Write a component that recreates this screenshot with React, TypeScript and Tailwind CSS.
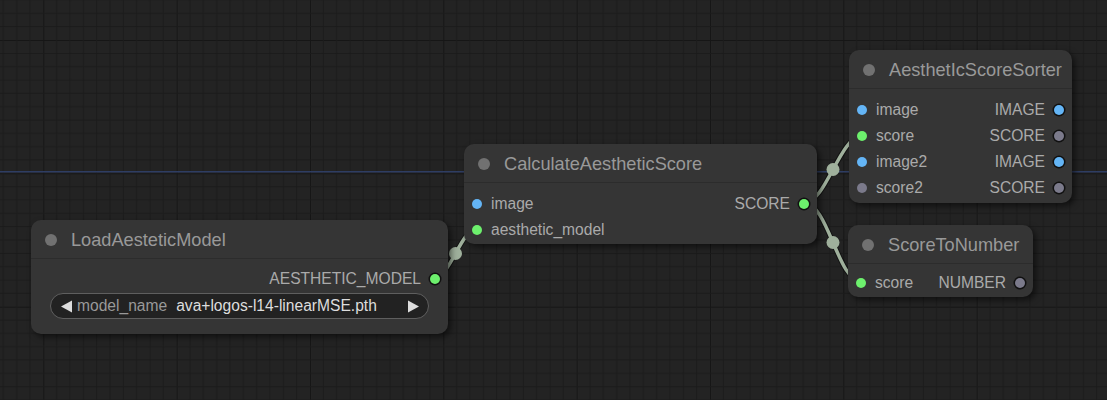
import React from "react";

type Slot = { label: string; dot: string };

type NodeProps = {
  title: string;
  className: string;
  bodyClass?: string;
  inputs?: Slot[];
  outputs?: Slot[];
  children?: React.ReactNode;
};

// slot dot colours
const GREEN = "bg-[#6df06d]";
const BLUE = "bg-[#64b5f6]";
const GREY = "bg-[#7b7a8b]";

const GraphNode = ({ title, className, bodyClass = "pt-[8px]", inputs = [], outputs = [], children }: NodeProps) => {
  const rows = Math.max(inputs.length, outputs.length);
  return (
    <div
      className={
        "absolute flex flex-col rounded-[10px] bg-[#353535] shadow-[3px_3px_6px_rgba(0,0,0,0.55)] " +
        className
      }
    >
      <div className="flex h-[39px] shrink-0 items-center gap-[14px] border-b border-[#2c2c2c] pl-[14px] pt-[2px]">
        <span className="block h-[12px] w-[12px] rounded-full bg-[#717171]" />
        <span className="text-[18.2px] leading-none text-[#999999]">{title}</span>
      </div>
      <div className={"flex flex-col " + bodyClass}>
        {Array.from({ length: rows }).map((_, i) => (
          <div key={i} className="flex h-[26px] items-center justify-between">
            {inputs[i] ? (
              <div className="flex items-center gap-[9px] pl-[8px]">
                <span className={"block h-[10px] w-[10px] rounded-full " + inputs[i].dot} />
                <span className="text-[15.6px] leading-none text-[#aaaaaa]">{inputs[i].label}</span>
              </div>
            ) : (
              <div />
            )}
            {outputs[i] ? (
              <div className="flex items-center gap-[9px] pr-[8px]">
                <span className="text-[15.6px] leading-none text-[#aaaaaa]">{outputs[i].label}</span>
                <span
                  className={
                    "block h-[10px] w-[10px] rounded-full ring-[1.5px] ring-[#111111] " + outputs[i].dot
                  }
                />
              </div>
            ) : (
              <div />
            )}
          </div>
        ))}
        {children}
      </div>
    </div>
  );
};

const GridAndLinks = () => {
  const step = 40 / 3;
  const tile = step * 10;
  const links = [
    { d: "M434 278 C450.3 278 460.7 229 477 229", mx: 455.5, my: 253.5 },
    { d: "M804 203 C826.1 203 839.9 136 862 136", mx: 833, my: 169.5 },
    { d: "M804 203 C828.5 203 837.5 282 862 282", mx: 833, my: 242.5 },
  ];
  return (
    <svg className="absolute inset-0" width="1107" height="400">
      <defs>
        <pattern id="grid" x={43.333} y={40} width={tile} height={tile} patternUnits="userSpaceOnUse">
          {Array.from({ length: 10 }).map((_, i) => (
            <g key={i}>
              <line
                x1={i * step}
                y1={0}
                x2={i * step}
                y2={tile}
                stroke={i === 0 ? "#161616" : "#1b1b1b"}
                strokeWidth={i === 0 ? 2 : 1}
              />
              <line
                x1={0}
                y1={i * step}
                x2={tile}
                y2={i * step}
                stroke={i === 0 ? "#161616" : "#1b1b1b"}
                strokeWidth={i === 0 ? 2 : 1}
              />
            </g>
          ))}
        </pattern>
      </defs>
      <rect width="1107" height="400" fill="url(#grid)" />
      <line x1={0} y1={171.7} x2={1107} y2={171.7} stroke="#2e3d63" strokeWidth={1.5} />
      {links.map((l, i) => (
        <g key={i}>
          <path d={l.d} fill="none" stroke="rgba(0,0,0,0.45)" strokeWidth={5.5} />
          <path d={l.d} fill="none" stroke="#9fb09c" strokeWidth={3.5} />
          <circle cx={l.mx} cy={l.my} r={6.5} fill="#9fb09c" />
        </g>
      ))}
    </svg>
  );
};

const Arrow = ({ dir }: { dir: "left" | "right" }) => (
  <svg width="13" height="13" viewBox="0 0 13 13">
    <path d={dir === "left" ? "M12 0.5 L1 6.5 L12 12.5 Z" : "M1 0.5 L12 6.5 L1 12.5 Z"} fill="#dddddd" />
  </svg>
);

export default function App() {
  return (
    <div
      className="relative h-[400px] w-[1107px] overflow-hidden bg-[#232323]"
      style={{ fontFamily: '"Liberation Sans", Arial, sans-serif' }}
    >
      <GridAndLinks />

      <GraphNode
        title="LoadAesteticModel"
        className="left-[31px] top-[220px] h-[114px] w-[417px]"
        bodyClass="pt-[7px]"
        outputs={[{ label: "AESTHETIC_MODEL", dot: GREEN }]}
      >
        <div className="mx-[19px] mt-[1px] flex h-[26px] items-center rounded-full border border-[#5f5f5f] bg-[#222222] pl-[9px] pr-[8px]">
          <Arrow dir="left" />
          <span className="ml-[4px] text-[15.6px] leading-none text-[#999999]">model_name</span>
          <span className="ml-[9px] text-[15.6px] leading-none text-[#dddddd]">ava+logos-l14-linearMSE.pth</span>
          <span className="ml-auto">
            <Arrow dir="right" />
          </span>
        </div>
      </GraphNode>

      <GraphNode
        title="CalculateAestheticScore"
        className="left-[464px] top-[144px] h-[100px] w-[353px]"
        inputs={[
          { label: "image", dot: BLUE },
          { label: "aesthetic_model", dot: GREEN },
        ]}
        outputs={[{ label: "SCORE", dot: GREEN }]}
      />

      <GraphNode
        title="AesthetIcScoreSorter"
        className="left-[849px] top-[50px] h-[153px] w-[223px]"
        inputs={[
          { label: "image", dot: BLUE },
          { label: "score", dot: GREEN },
          { label: "image2", dot: BLUE },
          { label: "score2", dot: GREY },
        ]}
        outputs={[
          { label: "IMAGE", dot: BLUE },
          { label: "SCORE", dot: GREY },
          { label: "IMAGE", dot: BLUE },
          { label: "SCORE", dot: GREY },
        ]}
      />

      <GraphNode
        title="ScoreToNumber"
        className="left-[848px] top-[225px] h-[72px] w-[185px]"
        bodyClass="pt-[6px]"
        inputs={[{ label: "score", dot: GREEN }]}
        outputs={[{ label: "NUMBER", dot: GREY }]}
      />
    </div>
  );
}
